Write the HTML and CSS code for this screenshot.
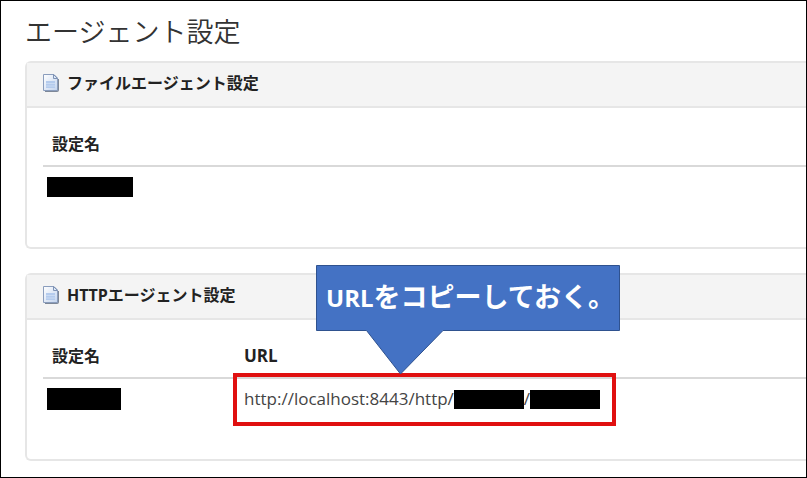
FILE: index.html
```html
<!DOCTYPE html>
<html lang="ja">
<head>
  <meta charset="UTF-8">
  <meta name="viewport" content="width=device-width, initial-scale=1.0">
  <title>エージェント設定</title>
  <link rel="stylesheet" href="styles.css">
</head>
<body>
  <svg class="defs" aria-hidden="true">
    <linearGradient id="paper" x1="0" y1="0" x2="1" y2="1">
      <stop offset="0" stop-color="#ffffff"/>
      <stop offset="1" stop-color="#c3d4ee"/>
    </linearGradient>
    <symbol id="page-icon" viewBox="0 0 16 18">
      <path d="M2 17h12q1 0 1-1V5" fill="none" stroke="#7d8797" stroke-width="2"/>
      <path d="M.5.5H11l3.500 3.500V16.500H.5z" fill="url(#paper)" stroke="#8a9dbd"/>
      <path d="M10.500.5v4h4z" fill="#dce7f7" stroke="#7f93b5"/>
      <path d="M3 7h9v7H3z" fill="#b4cbed"/>
      <path d="M3 9.500h9M3 12h9" stroke="#cfdef4" stroke-width=".8"/>
    </symbol>
  </svg>

  <main class="page">
    <h1>エージェント設定</h1>

    <section class="panel">
      <h2><svg class="icon" aria-hidden="true"><use href="#page-icon"/></svg>ファイルエージェント設定</h2>
      <div class="panel-body">
        <table>
          <thead>
            <tr><th>設定名</th></tr>
          </thead>
          <tbody>
            <tr><td class="name"><span class="mask mask-file"></span></td></tr>
          </tbody>
        </table>
      </div>
    </section>

    <section class="panel">
      <h2><svg class="icon" aria-hidden="true"><use href="#page-icon"/></svg>HTTPエージェント設定</h2>
      <div class="panel-body">
        <table>
          <thead>
            <tr><th class="col-name">設定名</th><th class="col-url">URL</th></tr>
          </thead>
          <tbody>
            <tr>
              <td class="name"><span class="mask mask-http"></span></td>
              <td class="col-url">
                <div class="url">
                  <span>http://localhost:8443/http/</span><span class="mask mask-path"></span><span>/</span><span class="mask mask-path"></span>
                  <div class="highlight"></div>
                  <div class="callout">
                    <svg class="callout-shape" viewBox="0 0 304 110" aria-hidden="true">
                      <path d="M.5.5h303v65H127L84.5 109 50.500 65.500H.5z" fill="#4472c4" stroke="#2f528f"/>
                    </svg>
                    <p><span class="latin">URL</span>をコピーしておく。</p>
                  </div>
                </div>
              </td>
            </tr>
          </tbody>
        </table>
      </div>
    </section>
  </main>
</body>
</html>
```

FILE: styles.css
```css
* {
  box-sizing: border-box;
}
body {
  margin: 0;
  font-family: "Open Sans", "Noto Sans CJK JP", sans-serif;
  font-size: 16px;
  line-height: 24px;
  color: #444;
  background: #fff;
}
.defs {
  position: absolute;
  width: 0;
  height: 0;
}
.page {
  min-height: 100vh;
  padding: 10px 0 16px 24px;
  border: 1px solid #000;
}
h1 {
  margin: 0 0 10px;
  font-family: "Noto Sans CJK JP", sans-serif;
  font-size: 27px;
  font-weight: 350;
  line-height: 40px;
  color: #333;
}
.panel {
  margin-bottom: 24px;
  border: 2px solid #e6e6e6;
  border-right: none;
  border-radius: 6px 0 0 6px;
}
.panel:last-child {
  margin-bottom: 0;
}
.panel h2 {
  display: flex;
  align-items: center;
  gap: 8px;
  height: 45px;
  margin: 0;
  padding: 0 0 4px 16px;
  border-bottom: 2px solid #e6e6e6;
  background: #f4f4f4;
  font-size: 16px;
  font-weight: bold;
  color: #222;
}
.icon {
  width: 16px;
  height: 18px;
}
.panel-body {
  height: 139px;
  padding: 15px 0 0 16px;
}
table {
  width: 100%;
  border-collapse: separate;
  border-spacing: 0;
}
th {
  height: 44px;
  padding: 0 9px;
  border-bottom: 2px solid #d9d9d9;
  text-align: left;
  color: #222;
}
td {
  height: 40px;
  padding: 0 9px;
}
.col-name {
  width: 192px;
}
.col-url {
  font-size: 17px;
}
.name {
  padding: 0 4px;
}
.mask {
  display: block;
  background: #000;
}
.mask-file {
  width: 86px;
  height: 20px;
}
.mask-http {
  width: 74px;
  height: 22px;
}
.mask-path {
  width: 70px;
  height: 19px;
}
.url {
  position: relative;
  display: flex;
  align-items: center;
  width: max-content;
}
/* annotations over the table */
.highlight {
  position: absolute;
  inset: -14px -16px -15px -11px;
  border: 4px solid #e01010;
}
.callout {
  position: absolute;
  left: 72px;
  bottom: 36px;
  width: 304px;
  height: 110px;
}
.callout-shape {
  position: absolute;
  width: 100%;
  height: 100%;
}
.callout p {
  position: relative;
  margin: 0;
  padding-left: 10px;
  font-size: 27px;
  font-weight: bold;
  line-height: 64px;
  white-space: nowrap;
  color: #fff;
}
.latin {
  font-size: 24px;
}
```
